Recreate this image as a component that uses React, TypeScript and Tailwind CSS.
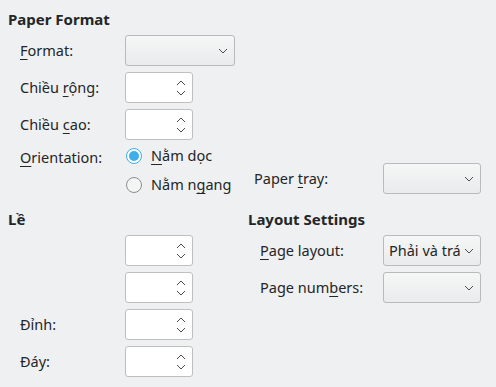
import React from "react";

const Chevron = ({ up = false }: { up?: boolean }) => (
  <svg width="10" height="6" viewBox="0 0 10 6" className="block shrink-0">
    <polyline
      points={up ? "1,5 5,1 9,5" : "1,1 5,5 9,1"}
      fill="none"
      stroke="#4d4d4d"
      strokeWidth="1"
    />
  </svg>
);

const Spin = () => (
  <div className="relative w-[68px] h-[31px] bg-white border border-[#bdbfc0] rounded-[3px] flex items-center justify-end pr-[6px]">
    <div className="flex flex-col gap-[4px]">
      <Chevron up />
      <Chevron />
    </div>
  </div>
);

const Combo = ({ w, text }: { w: string; text?: string }) => (
  <div
    className={`${w} h-[31px] border border-[#b8babc] rounded-[3px] bg-gradient-to-b from-[#f5f6f6] to-[#eaebec] flex items-center justify-between pl-[5px] pr-[6px] overflow-hidden`}
  >
    <span className="w-[71px] overflow-hidden whitespace-nowrap">{text}</span>
    <Chevron />
  </div>
);

const U = ({ children }: { children: React.ReactNode }) => (
  <span className="underline underline-offset-[3px] decoration-1">{children}</span>
);

const Row = ({ label, children, lw = "w-[105px]" }: { label: React.ReactNode; children: React.ReactNode; lw?: string }) => (
  <div className="flex items-center h-[31px]">
    <div className={`${lw} shrink-0 whitespace-nowrap`}>{label}</div>
    {children}
  </div>
);

const Radio = ({ checked, label }: { checked?: boolean; label: React.ReactNode }) => (
  <div className="flex items-center h-[20px]">
    <div
      className={`w-[16px] h-[16px] rounded-full border ml-[1px] flex items-center justify-center ${
        checked ? "border-[#3daee9] bg-white" : "border-[#8c8e90] bg-[#f4f5f5]"
      }`}
    >
      {checked && <div className="w-[10px] h-[10px] rounded-full bg-[#3daee9]" />}
    </div>
    <div className="ml-[9px] whitespace-nowrap">{label}</div>
  </div>
);

export default function App() {
  return (
    <div
      className="w-[496px] h-[387px] bg-[#eff0f1] text-[#232627] text-[14.5px] overflow-hidden"
      style={{ fontFamily: '"Noto Sans", sans-serif' }}
    >
      <div className="pl-[8px] pt-[9px]">
        <div className="h-[20px] leading-[20px] font-bold text-[15px]">Paper Format</div>
        <div className="mt-[6px] pl-[12px] flex flex-col gap-[6px]">
          <Row label={<><U>F</U>ormat:</>}>
            <Combo w="w-[110px]" />
          </Row>
          <Row label={<>Chiều <U>r</U>ộng:</>}>
            <Spin />
          </Row>
          <Row label={<>Chiều <U>c</U>ao:</>}>
            <Spin />
          </Row>
          <div className="flex">
            <div className="w-[105px] h-[22px] leading-[22px] shrink-0"><U>O</U>rientation:</div>
            <div className="w-[129px] shrink-0 flex flex-col gap-[9px]">
              <Radio checked label={<><U>N</U>ằm dọc</>} />
              <Radio label={<>Nằm n<U>g</U>ang</>} />
            </div>
            <div className="mt-[17px] flex items-center h-[31px]">
              <div className="w-[129px] shrink-0">Paper <U>t</U>ray:</div>
              <Combo w="w-[98px]" />
            </div>
          </div>
        </div>
        <div className="mt-[14px] flex">
          <div className="w-[240px] shrink-0">
            <div className="h-[20px] leading-[20px] font-bold text-[15px]">Lề</div>
            <div className="mt-[6px] pl-[12px] flex flex-col gap-[6px]">
              <Row label="">
                <Spin />
              </Row>
              <Row label="">
                <Spin />
              </Row>
              <Row label="Đỉnh:">
                <Spin />
              </Row>
              <Row label="Đáy:">
                <Spin />
              </Row>
            </div>
          </div>
          <div>
            <div className="h-[20px] leading-[20px] font-bold text-[15px]">Layout Settings</div>
            <div className="mt-[6px] pl-[12px] flex flex-col gap-[6px]">
              <Row lw="w-[123px]" label={<><U>P</U>age layout:</>}>
                <Combo w="w-[98px]" text="Phải và trái" />
              </Row>
              <Row lw="w-[123px]" label={<>Page num<U>b</U>ers:</>}>
                <Combo w="w-[98px]" />
              </Row>
            </div>
          </div>
        </div>
      </div>
    </div>
  );
}
